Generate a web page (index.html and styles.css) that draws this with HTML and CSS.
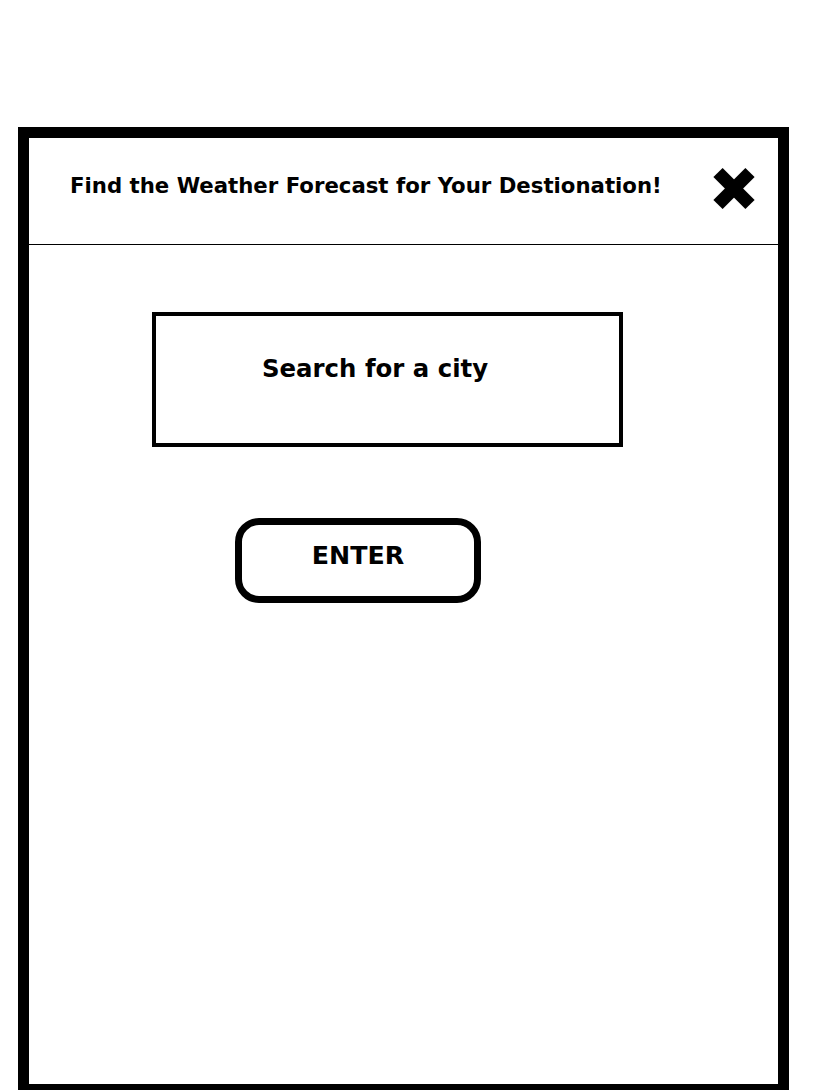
FILE: index.html
```html
<!DOCTYPE html>
<html lang="en">
<head>
<meta charset="utf-8">
<title>Weather Forecast</title>
<link rel="stylesheet" href="styles.css">
</head>
<body>
<div class="frame">
  <header class="header">
    <h1 class="title">Find the Weather Forecast for Your Destionation!</h1>
    <svg class="close" width="42" height="43" viewBox="0 0 42 43" aria-label="close">
      <line x1="5" y1="5.5" x2="37" y2="37.5" stroke="#000" stroke-width="13" stroke-linecap="butt"/>
      <line x1="37" y1="5.5" x2="5" y2="37.5" stroke="#000" stroke-width="13" stroke-linecap="butt"/>
    </svg>
  </header>
  <main class="content">
    <div class="search">Search for a city</div>
    <button class="enter" type="button">ENTER</button>
  </main>
</div>
</body>
</html>
```

FILE: styles.css
```css
html, body {
  margin: 0;
  padding: 0;
  background: #fff;
}

body {
  font-family: "DejaVu Sans", Verdana, sans-serif;
  color: #000;
}

.frame {
  box-sizing: border-box;
  margin: 127px 0 0 18px;
  width: 771px;
  height: 968px;
  border: 11px solid #000;
  background: #fff;
}

.header {
  box-sizing: border-box;
  height: 107px;
  border-bottom: 1px solid #000;
  display: flex;
  align-items: flex-start;
  justify-content: space-between;
  padding: 0 23px 0 41px;
}

.title {
  margin: 36px 0 0 0;
  font-size: 21.25px;
  font-weight: bold;
  line-height: 1.164;
  white-space: nowrap;
}

.close {
  display: block;
  margin-top: 29px;
}

.content {
  display: flex;
  flex-direction: column;
  align-items: flex-start;
}

.search {
  box-sizing: border-box;
  margin: 67px 0 0 123px;
  width: 471px;
  height: 135px;
  border: 4px solid #000;
  padding: 39px 0 0 106px;
  font-size: 24.4px;
  font-weight: bold;
  line-height: 1.164;
}

.enter {
  box-sizing: border-box;
  margin: 71px 0 0 206px;
  width: 246px;
  height: 85px;
  border: 7px solid #000;
  border-radius: 24px;
  background: #fff;
  padding: 16px 0 0 0;
  display: flex;
  justify-content: center;
  align-items: flex-start;
  font-family: "DejaVu Sans", Verdana, sans-serif;
  font-size: 25.3px;
  font-weight: bold;
  line-height: 1.164;
  color: #000;
}
```
